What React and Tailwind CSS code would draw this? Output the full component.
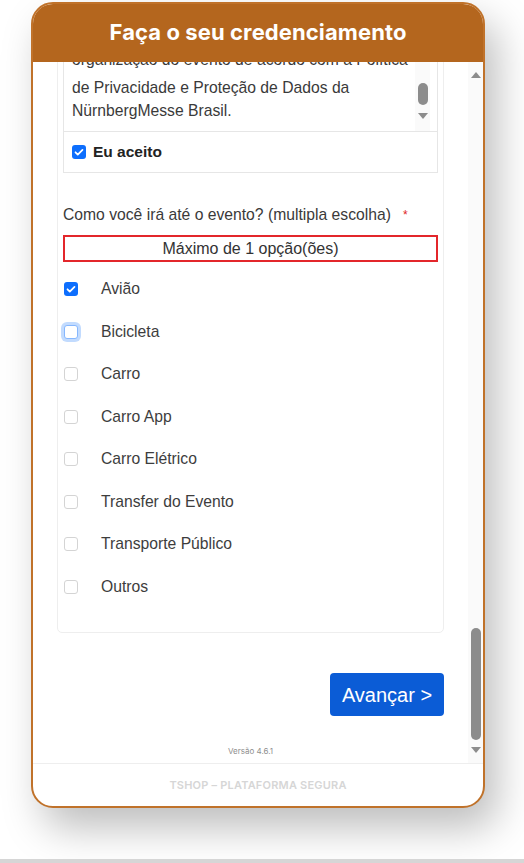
import React from 'react';

const options = [
  { label: 'Avião', checked: true },
  { label: 'Bicicleta', focused: true },
  { label: 'Carro' },
  { label: 'Carro App' },
  { label: 'Carro Elétrico' },
  { label: 'Transfer do Evento' },
  { label: 'Transporte Público' },
  { label: 'Outros' },
];

function CheckMark() {
  return (
    <svg className="w-full h-full" viewBox="0 0 16 16" fill="none">
      <path d="M4 8.3l2.6 2.6L12 5.5" stroke="white" strokeWidth={2} strokeLinecap="round" strokeLinejoin="round" />
    </svg>
  );
}

function Checkbox({ checked, focused }) {
  if (checked) {
    return (
      <span className="block w-[14px] h-[14px] rounded-[3px] bg-[#0d6efd]">
        <CheckMark />
      </span>
    );
  }
  if (focused) {
    return (
      <span className="block w-[14px] h-[14px] rounded-[3px] border border-[#86b7fe] bg-white shadow-[0_0_0_3px_rgba(13,110,253,0.25)]" />
    );
  }
  return <span className="block w-[14px] h-[14px] rounded-[3px] border border-[#d4d4d4] bg-white" />;
}

function ArrowUp() {
  return <span className="block w-0 h-0 border-l-[5px] border-r-[5px] border-b-[6px] border-l-transparent border-r-transparent border-b-[#8c8c8c]" />;
}

function ArrowDown() {
  return <span className="block w-0 h-0 border-l-[5px] border-r-[5px] border-t-[6px] border-l-transparent border-r-transparent border-t-[#8c8c8c]" />;
}

export default function App() {
  return (
    <div className="min-h-[863px] bg-white flex flex-col" style={{ fontFamily: '"Liberation Sans", Arial, sans-serif' }}>
      <div className="flex-1 pt-[2px] pl-[31px]">
        <div className="w-[454px] h-[806px] rounded-[22px] border-2 border-[#c0722a] overflow-hidden bg-white flex flex-col shadow-[12px_20px_40px_rgba(0,0,0,0.26)]">
          {/* Cabeçalho */}
          <div className="h-[58px] shrink-0 bg-[#b4661e] flex items-center justify-center pb-[2px]">
            <h1 className="text-white text-[22px] font-bold tracking-[0.1px]" style={{ fontFamily: 'Inter, "Noto Sans", sans-serif' }}>
              Faça o seu credenciamento
            </h1>
          </div>

          {/* Conteúdo rolável */}
          <div className="h-[701px] shrink-0 flex overflow-hidden">
            <div className="flex-1 flex flex-col px-6">
              <div className="-mt-[10px] border border-[#eeeeee] rounded-[5px] px-[5px] pb-6">
                {/* Termos */}
                <div className="border border-t-0 border-[#e6e6e6]">
                  <div className="flex border-b border-[#e6e6e6]">
                    <div className="flex-1 pl-2 pb-[9px] text-[15.7px] leading-[23px] text-[#3a3a3a] whitespace-nowrap overflow-hidden">
                      <p className="leading-[14px] mb-[9px]">organização do evento de acordo com a Política</p>
                      <p>de Privacidade e Proteção de Dados da</p>
                      <p>NürnbergMesse Brasil.</p>
                    </div>
                    <div className="w-[15px] mr-[7px] bg-[#fafafa] flex flex-col items-center justify-end pb-[12px]">
                      <span className="block w-[10px] h-[22px] rounded-full bg-[#8c8c8c]" />
                      <span className="mt-[8px]"><ArrowDown /></span>
                    </div>
                  </div>
                  <div className="h-[40px] flex items-center pl-2 gap-[7px]">
                    <span className="block w-[14px] h-[14px] rounded-[3px] bg-[#0d6efd]">
                      <CheckMark />
                    </span>
                    <span className="text-[15.5px] font-bold text-[#222]">Eu aceito</span>
                  </div>
                </div>

                {/* Pergunta */}
                <div className="mt-[32px] flex items-center text-[15.7px] leading-[20px] text-[#3a3a3a]">
                  <span>Como você irá até o evento? (multipla escolha)</span>
                  <span className="ml-[12px] text-[#e02424] text-[12px]">*</span>
                </div>
                <div className="mt-[10px] h-[27px] border-2 border-[#e3262b] flex items-center justify-center text-[16px] text-[#333]">
                  Máximo de 1 opção(ões)
                </div>

                <div className="mt-[6px] flex flex-col">
                  {options.map((opt) => (
                    <label key={opt.label} className="h-[42.5px] flex items-center">
                      <span className="w-[38px] pl-[1px]">
                        <Checkbox checked={opt.checked} focused={opt.focused} />
                      </span>
                      <span className="text-[15.7px] text-[#3d3d3d]">{opt.label}</span>
                    </label>
                  ))}
                </div>
              </div>

              <div className="mt-[40px] flex justify-end">
                <button className="w-[114px] h-[43px] rounded-[4px] bg-[#0b5cd6] text-white text-[20px]">
                  Avançar &gt;
                </button>
              </div>

              <p className="mt-[30px] text-center text-[8px] leading-[10px] text-[#8f8f8f]" style={{ fontFamily: 'Inter, sans-serif' }}>
                Versão 4.6.1
              </p>
            </div>

            {/* Barra de rolagem */}
            <div className="w-[15px] bg-[#fafafa] flex flex-col items-center pt-[10px] pb-[10px]">
              <ArrowUp />
              <div className="flex-1" />
              <span className="block w-[10px] h-[112px] rounded-full bg-[#8c8c8c]" />
              <span className="mt-[7px]"><ArrowDown /></span>
            </div>
          </div>

          {/* Rodapé */}
          <div className="flex-1 border-t border-[#eeeeee] flex items-center justify-center">
            <span className="text-[11px] font-semibold text-[#d6d6d6] tracking-[0.2px]" style={{ fontFamily: 'Inter, "Noto Sans", sans-serif' }}>
              TSHOP – PLATAFORMA SEGURA
            </span>
          </div>
        </div>
      </div>
      <div className="h-[4px] bg-[#d6d6d6]" />
    </div>
  );
}
